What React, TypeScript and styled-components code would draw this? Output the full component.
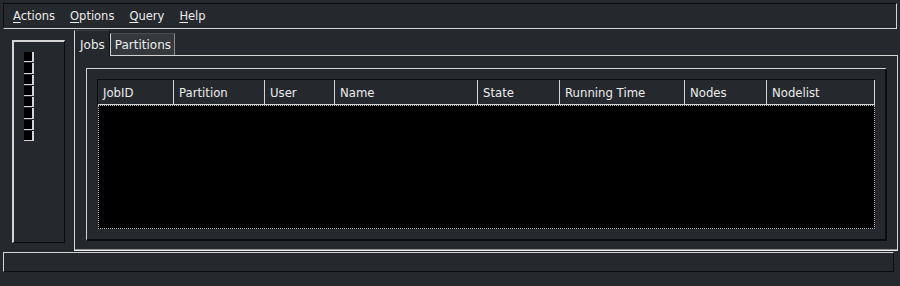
import React from "react";
import styled, { createGlobalStyle } from "styled-components";

const LIGHT = "#d4d4d4";
const DARK = "#0c0d0f";
const BG = "#25282d";
const TEXT = "#ececec";

const GlobalStyle = createGlobalStyle`
  html, body {
    margin: 0;
    padding: 0;
    background: ${BG};
  }
  body {
    font-family: "DejaVu Sans", "Liberation Sans", sans-serif;
    font-size: 11.5px;
    color: ${TEXT};
  }
`;

const Window = styled.div`
  width: 900px;
  height: 286px;
  background: ${BG};
  display: flex;
  flex-direction: column;
  box-sizing: border-box;
  padding-top: 3px;
  overflow: hidden;
`;

const MenuBar = styled.div`
  margin: 0 3px;
  height: 26px;
  box-sizing: border-box;
  border-top: 1px solid ${DARK};
  border-left: 1px solid ${DARK};
  border-bottom: 1px solid ${LIGHT};
  border-right: 1px solid ${LIGHT};
  display: flex;
  align-items: center;
  padding-left: 2px;
  gap: 1px;
`;

const MenuItem = styled.div`
  padding: 0 7px;
  line-height: 24px;
  cursor: default;
`;

const Mnemonic = styled.span`
  text-decoration: underline;
  text-underline-offset: 2px;
`;

const Main = styled.div`
  display: flex;
  height: 222px;
`;

const SidePanelSlot = styled.div`
  width: 74px;
  flex: none;
  padding: 11px 0 0 12px;
  box-sizing: border-box;
`;

const SidePanel = styled.div`
  width: 53px;
  height: 203px;
  box-sizing: border-box;
  border-top: 2px solid ${LIGHT};
  border-left: 2px solid ${LIGHT};
  border-bottom: 1px solid ${DARK};
  border-right: 1px solid ${DARK};
  padding: 10px 0 0 10px;
  display: flex;
  flex-direction: column;
  gap: 1px;
`;

const Cell = styled.div`
  width: 10px;
  height: 10.25px;
  box-sizing: border-box;
  background: #000;
  border-right: 2px solid ${LIGHT};
  border-bottom: 1px solid ${LIGHT};
`;

const Notebook = styled.div`
  flex: 1;
  display: flex;
  flex-direction: column;
  margin-right: 2px;
`;

const TabRow = styled.div`
  height: 26px;
  flex: none;
  display: flex;
  align-items: flex-end;
  position: relative;
  z-index: 1;
`;

const Tab = styled.div<{ $active?: boolean }>`
  box-sizing: border-box;
  height: ${(p) => (p.$active ? "26px" : "22px")};
  margin-bottom: ${(p) => (p.$active ? "-1px" : "0")};
  padding: ${(p) => (p.$active ? "2px 4px 0 5px" : "1px 3px 0 4px")};
  display: flex;
  align-items: center;
  font-size: 12px;
  background: ${(p) => (p.$active ? BG : "#35383d")};
  border-left: 1px solid ${LIGHT};
  border-top: 1px solid ${(p) => (p.$active ? "#3a3d42" : "#4a4d52")};
  border-right: 1px solid ${(p) => (p.$active ? DARK : "#8a8a8a")};
`;

const Page = styled.div`
  flex: 1;
  box-sizing: border-box;
  border-top: 1px solid ${LIGHT};
  border-left: 1px solid ${LIGHT};
  border-right: 1px solid ${LIGHT};
  border-bottom: 1px solid #eeeeee;
  box-shadow: inset 0 -1px 0 #8c8c8c;
  padding: 12px 10px 9px 11px;
  display: flex;
`;

const Frame = styled.div`
  flex: 1;
  box-sizing: border-box;
  border-top: 1px solid ${LIGHT};
  border-left: 1px solid ${LIGHT};
  border-bottom: 2px solid ${DARK};
  border-right: 2px solid ${DARK};
  padding: 10px;
  display: flex;
  flex-direction: column;
`;

const Table = styled.div`
  flex: 1;
  display: flex;
  flex-direction: column;
`;

const HeaderRow = styled.div`
  display: flex;
  height: 26px;
  flex: none;
  box-sizing: border-box;
  border-top: 1px solid ${DARK};
  border-left: 1px solid ${DARK};
`;

const HeaderCell = styled.div<{ $w: number }>`
  width: ${(p) => p.$w}px;
  flex: none;
  box-sizing: border-box;
  border-right: 1px solid ${LIGHT};
  border-bottom: 1px solid ${LIGHT};
  padding: 1px 0 0 5px;
  display: flex;
  align-items: center;
  font-size: 11.7px;
  white-space: nowrap;
  overflow: hidden;
`;

const Body = styled.div`
  flex: 1;
  background: #000;
  border: 1px dotted #b8b8b8;
  margin-left: 1px;
`;

const StatusBar = styled.div`
  margin: 1px 3px 0;
  width: 891px;
  height: 20px;
  box-sizing: border-box;
  border-top: 1px solid ${LIGHT};
  border-left: 1px solid ${LIGHT};
  border-bottom: 1px solid ${DARK};
  border-right: 1px solid ${DARK};
`;

const menus = [
  { key: "A", rest: "ctions" },
  { key: "O", rest: "ptions" },
  { key: "Q", rest: "uery" },
  { key: "H", rest: "elp" },
];

const columns: [string, number][] = [
  ["JobID", 76],
  ["Partition", 91],
  ["User", 70],
  ["Name", 143],
  ["State", 82],
  ["Running Time", 125],
  ["Nodes", 82],
  ["Nodelist", 108],
];

const App = () => {
  return (
    <>
      <GlobalStyle />
      <Window>
        <MenuBar>
          {menus.map((m) => (
            <MenuItem key={m.key}>
              <Mnemonic>{m.key}</Mnemonic>
              {m.rest}
            </MenuItem>
          ))}
        </MenuBar>
        <Main>
          <SidePanelSlot>
            <SidePanel>
              {Array.from({ length: 8 }).map((_, i) => (
                <Cell key={i} />
              ))}
            </SidePanel>
          </SidePanelSlot>
          <Notebook>
            <TabRow>
              <Tab $active>Jobs</Tab>
              <Tab>Partitions</Tab>
            </TabRow>
            <Page>
              <Frame>
                <Table>
                  <HeaderRow>
                    {columns.map(([name, w]) => (
                      <HeaderCell key={name} $w={w}>
                        {name}
                      </HeaderCell>
                    ))}
                  </HeaderRow>
                  <Body />
                </Table>
              </Frame>
            </Page>
          </Notebook>
        </Main>
        <StatusBar />
      </Window>
    </>
  );
};

export default App;
